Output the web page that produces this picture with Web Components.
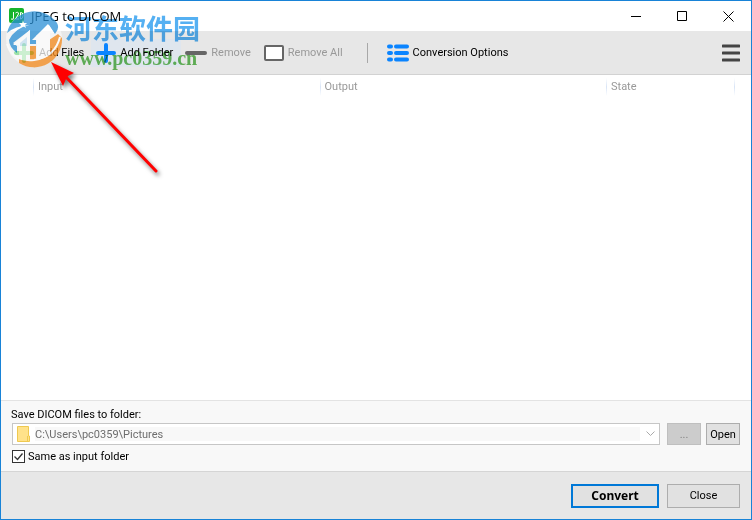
<!DOCTYPE html>
<html lang="en">
<head>
<meta charset="utf-8">
<title>JPEG to DICOM</title>
<style>
  html, body { height: 100%; margin: 0; }
  body { font: 11px/17px Roboto, sans-serif; color: #000; }
</style>
</head>
<body>
<app-window></app-window>

<script>
function define(name, html) {
  const template = document.createElement('template');
  template.innerHTML = html;
  customElements.define(name, class extends HTMLElement {
    constructor() {
      super();
      this.attachShadow({ mode: 'open' });
      this.shadowRoot.appendChild(template.content.cloneNode(true));
    }
  });
}

// Title bar with the app icon and the window controls
define('title-bar', `
  <style>
    :host { display: flex; align-items: center; height: 30px; background: #fff; }
    .icon { margin: 0 6px 0 8px; }
    h1 { flex: 1; margin: 0; font: 13px/20px "Open Sans", sans-serif; }
    button { display: flex; align-items: center; justify-content: center; width: 46px; height: 29px; padding: 0; border: 0; background: none; }
  </style>
  <svg class="icon" width="16" height="16" viewBox="0 0 16 16">
    <rect width="15" height="15" rx="2" fill="#16b32c"/>
    <path d="M4.500 4v6q0 2-2.500 1M6.500 5q3-2 3 1l-3 5h3.500M11.500 4.500v6.500q2.500 0 2.500-3.500t-2.500-3" fill="none" stroke="#fff"/>
  </svg>
  <h1>JPEG to DICOM</h1>
  <button aria-label="Minimize"><svg width="10" height="10"><path d="M0 5.500h10" stroke="#000"/></svg></button>
  <button aria-label="Maximize"><svg width="10" height="10"><path d="M.5.500h9v9h-9z" fill="none" stroke="#000"/></svg></button>
  <button aria-label="Close window"><svg width="11" height="11"><path d="M.5.500l10 10M10.500.500l-10 10" stroke="#000"/></svg></button>
`);

define('tool-button', `
  <style>
    :host { display: block; }
    button { display: flex; align-items: center; gap: 4px; height: 28px; padding: 0; border: 0; background: none; font: inherit; color: inherit; white-space: nowrap; }
  </style>
  <button><slot name="icon"></slot><slot></slot></button>
`);

define('tool-bar', `
  <style>
    :host { display: flex; align-items: center; height: 43px; padding: 0 11px 0 13px; background: #e7e7e7; border-bottom: 1px solid #d2d2d2; }
    svg { display: block; }
    .folder { margin: 0 4px 0 7px; padding: 0 8px 0 5px; background: #dfe6ee; }
    .all { margin-left: 13px; }
    .off { color: #999; }
    hr { width: 1px; height: 20px; margin: 0 19px 0 24px; border: 0; background: #a8a8a8; }
    .menu { margin-left: auto; }
  </style>
  <tool-button><svg slot="icon" width="21" height="20"><path d="M10 2v16M2 10h16" stroke="#2fbf45" stroke-width="4" stroke-linecap="round"/></svg>Add Files</tool-button>
  <tool-button class="folder"><svg slot="icon" width="20" height="20"><path d="M10 2v16M2 10h16" stroke="#0a84ff" stroke-width="4" stroke-linecap="round"/></svg>Add Folder</tool-button>
  <tool-button class="off"><svg slot="icon" width="22" height="20"><path d="M2 10h18" stroke="#666" stroke-width="4" stroke-linecap="round"/></svg>Remove</tool-button>
  <tool-button class="off all"><svg slot="icon" width="20" height="16"><rect x="1" y="1" width="18" height="14" rx="1" fill="#fff" stroke="#666" stroke-width="2"/></svg>Remove All</tool-button>
  <hr>
  <tool-button><svg slot="icon" width="22" height="18"><path d="M2 2.500h2M9 2.500h11M2 9h2M9 9h11M2 15.500h2M9 15.500h11" stroke="#0a84ff" stroke-width="4" stroke-linecap="round"/></svg>Conversion Options</tool-button>
  <tool-button class="menu" aria-label="Menu"><svg slot="icon" width="18" height="18"><path d="M1 2h16M1 9h16M1 16h16" stroke="#444" stroke-width="3" stroke-linecap="round"/></svg></tool-button>
`);

define('file-list', `
  <style>
    :host { display: block; flex: 1; background: #fff; }
    table { width: 100%; border-collapse: collapse; table-layout: fixed; }
    th { box-sizing: border-box; height: 23px; padding: 0 0 0 5px; text-align: left; font-weight: normal; color: #999; background: linear-gradient(#fff, #d8e4f6, #fff) left / 1px 18px no-repeat; }
    th:first-child { width: 32px; background: none; }
    th:nth-child(4) { width: 128px; }
    th:last-child { width: 17px; }
  </style>
  <table><thead><tr><th></th><th>Input</th><th>Output</th><th>State</th><th></th></tr></thead></table>
`);

define('save-panel', `
  <style>
    :host { display: block; height: 71px; box-sizing: border-box; padding: 5px 11px 0 10px; background: #f8f8f8; border-top: 1px solid #e3e3e3; }
    label { display: block; }
    .row { display: flex; height: 22px; }
    .path { display: flex; flex: 1; align-items: center; box-sizing: border-box; margin: 0 7px 0 1px; padding: 0 4px; background: #fff; border: 1px solid #c6c6c6; }
    input[type=text] { flex: 1; min-width: 0; height: 14px; margin: 0 6px 0 4px; padding: 0; border: 0; background: #f8f8f8; font: inherit; color: #6d6d6d; }
    .row button { box-sizing: border-box; width: 34px; padding: 0; border: 1px solid #adadad; background: #e1e1e1; font: inherit; }
    .row button:disabled { margin-right: 5px; background: #ccc; border-color: #bfbfbf; color: #838383; }
    .same { display: flex; align-items: center; gap: 3px; margin: 3px 0 0 1px; }
    .same input { appearance: none; width: 13px; height: 13px; margin: 0; border: 1px solid #333; background: #fff; }
    .same input:checked { background: #fff url("data:image/svg+xml,%3Csvg xmlns='http://www.w3.org/2000/svg' viewBox='0 0 11 11'%3E%3Cpath d='M1.500 5.500l3 3 5-6' fill='none' stroke='%23333' stroke-width='1.300'/%3E%3C/svg%3E"); }
  </style>
  <label for="path">Save DICOM files to folder:</label>
  <div class="row">
    <div class="path">
      <svg width="14" height="16"><path d="M.5.500h11v9.500h1v5.500H.5z" fill="#ffe28a" stroke="#efc950"/><path d="M10.500 15V10" stroke="#efc950"/></svg>
      <input id="path" type="text" value="C:\\Users\\pc0359\\Pictures" readonly>
      <svg width="9" height="6"><path d="M.5.500l4 4 4-4" fill="none" stroke="#aaa"/></svg>
    </div>
    <button disabled>...</button>
    <button>Open</button>
  </div>
  <label class="same"><input type="checkbox" checked>Same as input folder</label>
`);

define('action-bar', `
  <style>
    :host { display: flex; justify-content: flex-end; align-items: center; gap: 8px; height: 47px; padding-right: 11px; background: #e7e7e7; border-top: 1px solid #d5d5d5; }
    button { box-sizing: border-box; height: 24px; padding: 0; border: 1px solid #adadad; background: #e1e1e1; font: inherit; }
    .close { width: 73px; }
    .convert { width: 88px; border: 2px solid #0078d7; font: bold 12px/16px "Noto Sans", sans-serif; }
  </style>
  <button class="convert">Convert</button>
  <button class="close">Close</button>
`);

// Translucent site stamp that lies over the top left corner
define('site-stamp', `
  <style>
    :host { display: contents; }
    svg, div { position: absolute; pointer-events: none; }
    svg { top: 9px; left: 4px; opacity: .75; }
    div { top: 8px; left: 64px; mix-blend-mode: multiply; }
    p { margin: 0; white-space: nowrap; }
    .name { font: bold 27px/38px "Noto Sans CJK SC", sans-serif; color: #55b0f2; }
    .site { font: bold 20px/22px "Liberation Serif", serif; color: #68bd5c; }
  </style>
  <svg width="58" height="58" viewBox="0 0 58 58">
    <circle cx="29" cy="29" r="28" fill="#fff" fill-opacity=".7"/>
    <path d="M2 23A28 28 0 0 1 52 13Q55 18 50 24L44 15L31 26V34H25V20L8 33L12 36V43Q4 37 4 30Q10 18 24 15Q10 16 2 23z" fill="#2a90d6"/>
    <path d="M57 28A28 28 0 0 1 14 53V47L25 49V36H31V49L44 45V30L53 24Q56 27 57 28z" fill="#f58a1c"/>
    <path d="M14 48V35H8L25 20V50Q19 50 14 48z" fill="#fff"/>
    <path d="M32 50V30H27L43 14L49 23H45V45Q39 49 32 50z" fill="#fff"/>
    <path d="M15 33L22 27V36H15z" fill="#2a90d6" fill-opacity=".25"/>
    <path d="M2 34Q8 52 29 50Q50 47 55 27" fill="none" stroke="#fff" stroke-width="2"/>
    <path d="M18 10l1 3 3 0-2 2 1 3-3-2-3 2 1-3-2-2 3 0z" fill="#fff"/>
  </svg>
  <div><p class="name">河东软件园</p><p class="site">www.pc0359.cn</p></div>
`);

define('pointer-arrow', `
  <style>
    :host { position: absolute; top: 55px; left: 45px; pointer-events: none; }
    svg { display: block; filter: drop-shadow(2px 3px 2px #0008); }
  </style>
  <svg width="120" height="125"><path d="M19 20L110 115" stroke="#f00" stroke-width="3" stroke-linecap="round"/><path d="M5 6l23 11-6 3-2 3-3 7z" fill="#f00"/></svg>
`);

define('app-window', `
  <style>
    :host { position: relative; display: flex; flex-direction: column; box-sizing: border-box; min-height: 100%; border: 1px solid #1883d7; overflow: hidden; }
  </style>
  <title-bar></title-bar>
  <tool-bar></tool-bar>
  <file-list></file-list>
  <save-panel></save-panel>
  <action-bar></action-bar>
  <site-stamp></site-stamp>
  <pointer-arrow></pointer-arrow>
`);
</script>
</body>
</html>
